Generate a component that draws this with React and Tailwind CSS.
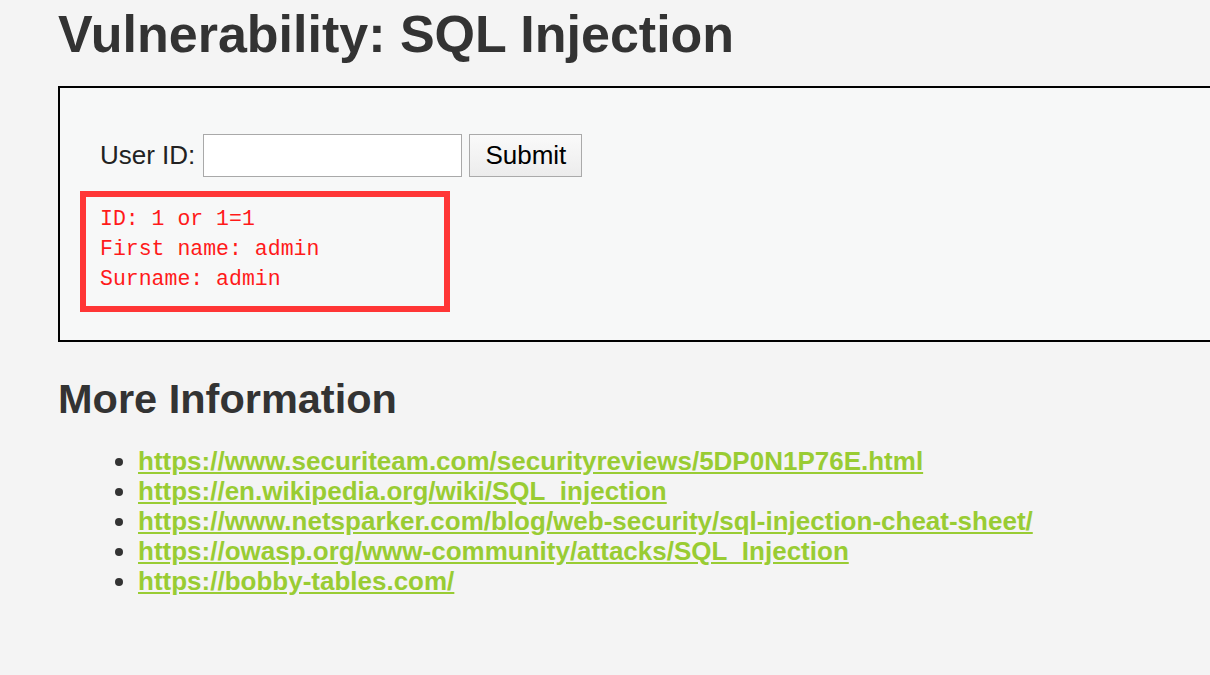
const links = [
  'https://www.securiteam.com/securityreviews/5DP0N1P76E.html',
  'https://en.wikipedia.org/wiki/SQL_injection',
  'https://www.netsparker.com/blog/web-security/sql-injection-cheat-sheet/',
  'https://owasp.org/www-community/attacks/SQL_Injection',
  'https://bobby-tables.com/',
];

const App = () => {
  return (
    <div className="min-h-screen overflow-hidden bg-[#f4f4f4] pl-[58px] font-['Liberation_Sans',Arial,sans-serif] text-[#333]">
      <h1 className="pt-[8px] text-[52px] font-bold leading-none whitespace-nowrap">
        Vulnerability: SQL Injection
      </h1>

      <div className="mt-[26px] w-[1200px] border-2 border-black bg-[#f7f8f8] pb-[28px] pl-[20px] pt-[46px]">
        <form className="flex items-center pl-[20px]" onSubmit={(e) => e.preventDefault()}>
          <label className="text-[26px] text-[#222]">User ID:</label>
          <input
            type="text"
            className="ml-[8px] h-[43px] w-[259px] border border-[#a9a9a9] bg-white"
          />
          <button
            type="submit"
            className="ml-[7px] h-[43px] w-[113px] border border-[#aaa] bg-gradient-to-b from-[#fafafa] to-[#ececec] text-[26px] text-black"
          >
            Submit
          </button>
        </form>

        <pre className="mt-[14px] w-[370px] border-[6px] border-[#ff3636] pb-[12px] pl-[14px] pt-[7px] font-['Liberation_Mono','Courier_New',monospace] text-[21.5px] leading-[30px] text-[#ff1a1a]">
          ID: 1 or 1=1{'\n'}First name: admin{'\n'}Surname: admin
        </pre>
      </div>

      <h2 className="mt-[36px] text-[41.5px] font-bold leading-none">More Information</h2>

      <ul className="mt-[26px] list-disc pl-[80px] text-[26px] leading-[30px]">
        {links.map((href) => (
          <li key={href}>
            <a href={href} className="font-bold text-[#99cc33] underline">
              {href}
            </a>
          </li>
        ))}
      </ul>
    </div>
  );
};

export default App;
